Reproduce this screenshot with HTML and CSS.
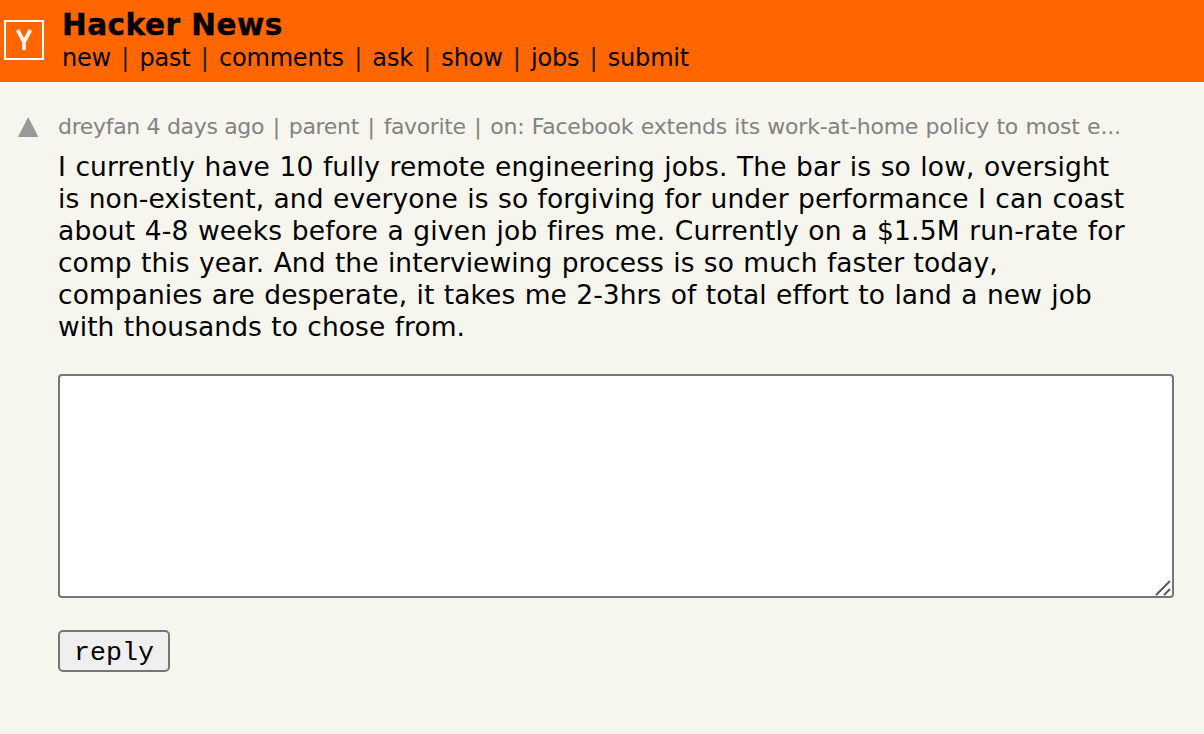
FILE: index.html
```html
<!DOCTYPE html>
<html lang="en">
<head>
    <meta charset="UTF-8">
    <meta name="viewport" content="width=device-width, initial-scale=1.0">
    <title>Hacker News</title>
    <link rel="stylesheet" href="styles.css">
</head>
<body>
    <header class="header">
        <svg class="logo" width="40" height="40" viewBox="0 0 40 40">
            <rect x="1" y="1" width="38" height="38" fill="none" stroke="#fff" stroke-width="2"/>
            <path d="M13.6 10L20 22L26.4 10M20 20V30.3" fill="none" stroke="#fff" stroke-width="3.8" stroke-opacity="0.92"/>
        </svg>
        <div class="header-text">
            <div class="site-name">Hacker News</div>
            <nav class="nav">new <i>|</i> past <i>|</i> comments <i>|</i> ask <i>|</i> show <i>|</i> jobs <i>|</i> submit</nav>
        </div>
    </header>
    <main class="item">
        <svg class="vote" width="21" height="20" viewBox="0 0 21 20">
            <path d="M10.2 0L20.4 20H0Z" fill="#999"/>
        </svg>
        <div class="content">
            <div class="meta"><span class="user">dreyfan 4 days ago</span><span class="sep"> | </span><span class="parent">parent</span><span class="sep"> | </span><span class="favorite">favorite</span><span class="sep"> | </span><span class="story">on: Facebook extends its work-at-home policy to most e...</span></div>
            <div class="comment">
                <span class="line1">I currently have 10 fully remote engineering jobs. The bar is so low, oversight</span><br>
                <span class="line2">is non-existent, and everyone is so forgiving for under performance I can coast</span><br>
                <span class="line3">about 4-8 weeks before a given job fires me. Currently on a $1.5M run-rate for</span><br>
                <span class="line4">comp this year. And the interviewing process is so much faster today,</span><br>
                <span class="line5">companies are desperate, it takes me 2-3hrs of total effort to land a new job</span><br>
                <span class="line6">with thousands to chose from.</span>
            </div>
            <form class="reply-form">
                <div class="reply-wrap">
                    <textarea class="reply-box"></textarea>
                    <svg class="grip" width="16" height="16" viewBox="0 0 16 16">
                        <path d="M1 15L15 1M9 15L15 9" fill="none" stroke="#555" stroke-width="1.9"/>
                    </svg>
                </div>
                <button type="button" class="reply-btn">reply</button>
            </form>
        </div>
    </main>
</body>
</html>
```
FILE: styles.css
```css
* {
    margin: 0;
    padding: 0;
    box-sizing: border-box;
}

body {
    font-family: Verdana, "DejaVu Sans", sans-serif;
    background-color: #f6f6ef;
    color: #000;
    height: 734px;
    overflow: hidden;
}

.header {
    display: flex;
    align-items: flex-start;
    height: 82px;
    padding-left: 4px;
    background-color: #ff6600;
}

.logo {
    margin-top: 20px;
}

.header-text {
    margin: 9px 0 0 18px;
    white-space: nowrap;
}

.site-name {
    font-size: 29.5px;
    font-weight: bold;
    line-height: 33px;
    letter-spacing: 0.5px;
    -webkit-text-stroke: 0.4px #000;
}

.nav {
    font-size: 24px;
    line-height: 32px;
    letter-spacing: -0.2px;
    word-spacing: 2.85px;
}

.nav i {
    font-style: normal;
    color: #222;
}

.item {
    display: flex;
    padding: 31px 30px 0 18px;
}

.vote {
    margin-top: 4px;
}

.content {
    margin-left: 19px;
    flex: 1;
    white-space: nowrap;
}

.meta {
    font-size: 22px;
    line-height: 28px;
    color: #828282;
}

.user {
    letter-spacing: -0.33px;
}

.sep {
    white-space: pre;
    margin: 0 1.6px;
}

.parent {
    letter-spacing: -0.3px;
}

.favorite {
    letter-spacing: -0.38px;
}

.story {
    letter-spacing: -0.23px;
    word-spacing: 0.7px;
}

.comment {
    margin-top: 10px;
    font-size: 26.5px;
    line-height: 32px;
    word-spacing: 0.9px;
}

.line1 {
    letter-spacing: 0.12px;
}

.line2 {
    letter-spacing: 0.08px;
}

.line3 {
    letter-spacing: 0.16px;
}

.line4 {
    letter-spacing: 0.05px;
}

.line5 {
    letter-spacing: 0.06px;
}

.line6 {
    letter-spacing: 0.05px;
}

.reply-form {
    display: flex;
    flex-direction: column;
    align-items: flex-start;
    margin-top: 31px;
}

.reply-wrap {
    position: relative;
}

.reply-box {
    display: block;
    width: 1116px;
    height: 224px;
    background-color: #fff;
    border: 2px solid #767676;
    border-radius: 4px;
    resize: none;
}

.grip {
    position: absolute;
    right: 3px;
    bottom: 2px;
}

.reply-btn {
    margin-top: 32px;
    padding-top: 4px;
    width: 112px;
    height: 42px;
    font-family: "Courier New", "Liberation Mono", monospace;
    font-size: 26.6px;
    color: #000;
    background-color: #efefef;
    border: 2px solid #767676;
    border-radius: 5px;
}
```
